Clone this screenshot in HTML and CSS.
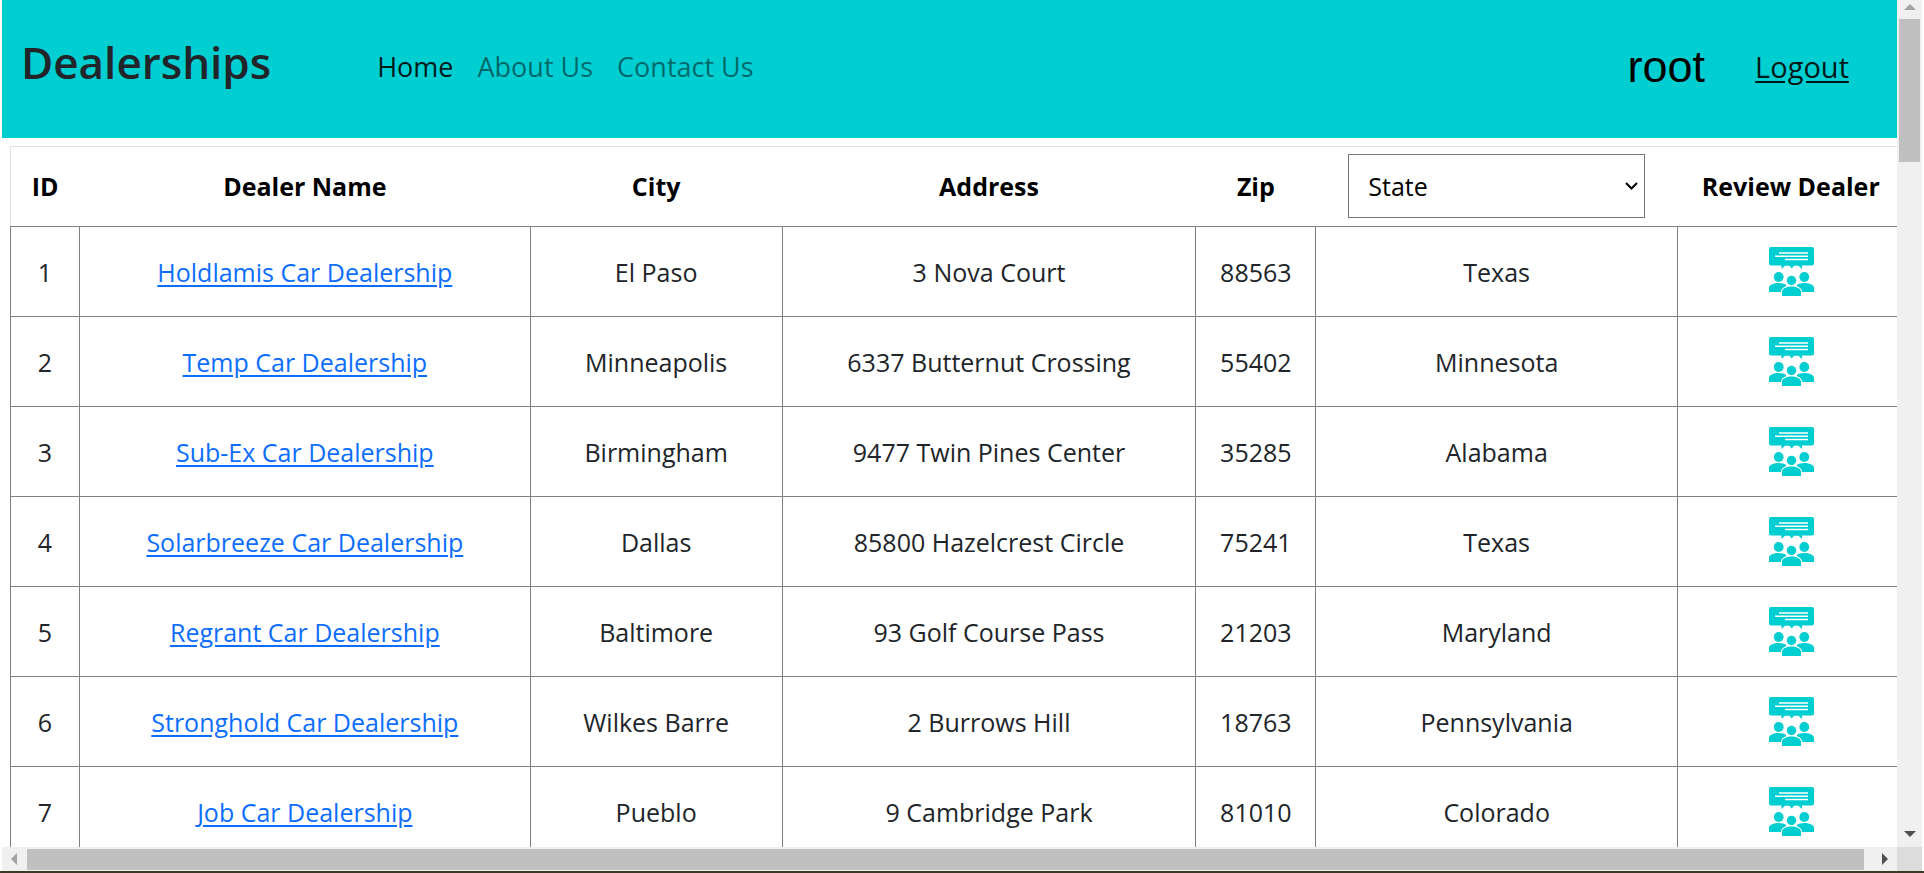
FILE: index.html
```html
<!DOCTYPE html>
<html lang="en">
<head>
<meta charset="utf-8">
<title>Dealerships</title>
<link rel="stylesheet" href="styles.css">
</head>
<body>
<svg class="sprite" aria-hidden="true">
  <symbol id="review" viewBox="0 0 45 49">
    <path fill-rule="evenodd" d="M2 0h41a2 2 0 0 1 2 2v14.500a2 2 0 0 1-2 2H33v3.500l-3.500-3.200H25L22.700 21.500 20.400 18.800H16l-3.500 3.200v-3.500H2a2 2 0 0 1-2-2V2a2 2 0 0 1 2-2zM10 5.300v1.400h29V5.300zM6 8.500v1.400h33V8.500zM16 11.800v1.400h23v-1.400z"/>
    <circle cx="9.700" cy="30" r="4.900"/>
    <circle cx="35.300" cy="30" r="4.900"/>
    <circle cx="22.500" cy="33.500" r="4.700"/>
    <path d="M0 45v-4.500C0 38 5 36 9.700 36c3 0 5.500.7 7.300 1.800v1.400c-3 1-5 2.800-5.200 5.800zM45 45v-4.500C45 38 40 36 35.300 36c-3 0-5.500.7-7.300 1.800v1.400c3 1 5 2.800 5.200 5.800zM13 49v-4.500c0-3 5-5 9.500-5s9.500 2 9.500 5V49z"/>
  </symbol>
</svg>
<div class="window">
  <main class="viewport">
    <nav class="navbar">
      <h1 class="brand">Dealerships</h1>
      <div class="links">
        <a class="link active" href="#home">Home</a>
        <a class="link" href="#about">About Us</a>
        <a class="link" href="#contact">Contact Us</a>
      </div>
      <div class="account">
        <span class="user">root</span>
        <a class="logout" href="#logout">Logout</a>
      </div>
    </nav>
    <table class="dealers">
      <colgroup>
        <col class="c-id"><col class="c-name"><col class="c-city"><col class="c-address"><col class="c-zip"><col class="c-state"><col class="c-review">
      </colgroup>
      <thead>
        <tr>
          <th>ID</th><th>Dealer Name</th><th>City</th><th>Address</th><th>Zip</th>
          <th><div class="picker"><select class="state" aria-label="State"><option>State</option><option>Alabama</option><option>Colorado</option><option>Maryland</option><option>Minnesota</option><option>Pennsylvania</option><option>Texas</option></select><svg class="chevron" viewBox="0 0 13 8" aria-hidden="true"><path d="M1 1l5.500 5.500L12 1"/></svg></div></th>
          <th>Review Dealer</th>
        </tr>
      </thead>
      <tbody>
        <tr><td>1</td><td><a href="#1">Holdlamis Car Dealership</a></td><td>El Paso</td><td>3 Nova Court</td><td>88563</td><td>Texas</td><td><a href="#r1" aria-label="Review"><svg class="icon"><use href="#review"/></svg></a></td></tr>
        <tr><td>2</td><td><a href="#2">Temp Car Dealership</a></td><td>Minneapolis</td><td>6337 Butternut Crossing</td><td>55402</td><td>Minnesota</td><td><a href="#r2" aria-label="Review"><svg class="icon"><use href="#review"/></svg></a></td></tr>
        <tr><td>3</td><td><a href="#3">Sub-Ex Car Dealership</a></td><td>Birmingham</td><td>9477 Twin Pines Center</td><td>35285</td><td>Alabama</td><td><a href="#r3" aria-label="Review"><svg class="icon"><use href="#review"/></svg></a></td></tr>
        <tr><td>4</td><td><a href="#4">Solarbreeze Car Dealership</a></td><td>Dallas</td><td>85800 Hazelcrest Circle</td><td>75241</td><td>Texas</td><td><a href="#r4" aria-label="Review"><svg class="icon"><use href="#review"/></svg></a></td></tr>
        <tr><td>5</td><td><a href="#5">Regrant Car Dealership</a></td><td>Baltimore</td><td>93 Golf Course Pass</td><td>21203</td><td>Maryland</td><td><a href="#r5" aria-label="Review"><svg class="icon"><use href="#review"/></svg></a></td></tr>
        <tr><td>6</td><td><a href="#6">Stronghold Car Dealership</a></td><td>Wilkes Barre</td><td>2 Burrows Hill</td><td>18763</td><td>Pennsylvania</td><td><a href="#r6" aria-label="Review"><svg class="icon"><use href="#review"/></svg></a></td></tr>
        <tr><td>7</td><td><a href="#7">Job Car Dealership</a></td><td>Pueblo</td><td>9 Cambridge Park</td><td>81010</td><td>Colorado</td><td><a href="#r7" aria-label="Review"><svg class="icon"><use href="#review"/></svg></a></td></tr>
      </tbody>
    </table>
  </main>
  <div class="bar vertical" aria-hidden="true">
    <svg class="arrow off" viewBox="0 0 12 6"><path d="M0 6L6 0l6 6z"/></svg>
    <div class="track"><div class="thumb"></div></div>
    <svg class="arrow" viewBox="0 0 12 6"><path d="M0 0l6 6 6-6z"/></svg>
  </div>
  <div class="bar horizontal" aria-hidden="true">
    <svg class="arrow off" viewBox="0 0 6 12"><path d="M6 0L0 6l6 6z"/></svg>
    <div class="track"><div class="thumb"></div></div>
    <svg class="arrow" viewBox="0 0 6 12"><path d="M0 0l6 6-6 6z"/></svg>
  </div>
  <div class="corner"></div>
</div>
</body>
</html>
```
FILE: styles.css
```css
* { box-sizing: border-box; }

body {
  margin: 0;
  background: #fff;
  color: #212529;
  font: 25px/40px "Open Sans", "Noto Sans", sans-serif;
}

.sprite { display: none; }

.window {
  display: grid;
  grid-template: minmax(0, 1fr) 24px / minmax(0, 1fr) 25px;
  height: 100vh;
  padding: 0 2px;
  border-bottom: 2px solid #3d372a;
}

.viewport { overflow: hidden; }

.navbar {
  display: flex;
  align-items: center;
  height: 138px;
  padding: 0 48px 4px 19px;
  background: #00ced1;
}

.brand {
  margin: 0 94px 10px 0;
  font-size: 44px;
  line-height: 60px;
  font-weight: 600;
}

.links { display: flex; font-size: 27px; }
.link {
  padding: 0 12px;
  color: rgba(0, 0, 0, .5);
  text-decoration: none;
}
.link.active { color: rgba(0, 0, 0, .9); }

.account {
  display: flex;
  align-items: center;
  gap: 50px;
  margin-left: auto;
  color: #000;
}
.user { font: 45px/60px "Liberation Sans", Arial, sans-serif; }
.logout { color: rgba(0, 0, 0, .9); font-size: 29px; text-underline-offset: 3px; }

.dealers {
  width: 100%;
  margin: 8px 0 0 8px;
  border-collapse: collapse;
  table-layout: fixed;
  text-align: center;
}
.c-id { width: 3.64%; }
.c-name { width: 23.8%; }
.c-city { width: 13.3%; }
.c-address { width: 21.85%; }
.c-zip { width: 6.33%; }
.c-state { width: 19.1%; }
.c-review { width: 11.98%; }

.dealers thead { border: 1px solid #dee2e6; }
.dealers th {
  height: 80px;
  padding: 0 0 2px;
  color: #000;
  font-weight: 700;
}
.dealers td {
  height: 90px;
  padding: 0;
  border: 1px solid #808080;
}
.dealers a { color: #0d6efd; text-underline-offset: 3px; }

.picker {
  display: grid;
  align-items: center;
  width: 82%;
  margin: 0 auto;
}
.state {
  grid-area: 1 / 1;
  height: 64px;
  width: 100%;
  padding: 0 19px;
  border: 1px solid #767676;
  border-radius: 0;
  background: #fff;
  color: #000;
  font: inherit;
  font-weight: 400;
  appearance: none;
}
.chevron {
  grid-area: 1 / 1;
  justify-self: end;
  width: 13px;
  height: 8px;
  margin-right: 7px;
  fill: none;
  stroke: #000;
  stroke-width: 2;
  pointer-events: none;
}

.icon {
  display: block;
  width: 45px;
  height: 49px;
  margin: 0 auto;
  fill: #00ced1;
}

.bar { display: flex; align-items: center; background: #f0f0f0; }
.track { flex: 1; }
.thumb { background: #c0c0c0; }
.arrow { width: 12px; height: 6px; fill: #505050; }
.arrow.off { fill: #a3a3a3; }

.vertical { flex-direction: column; padding: 4px 0 10px; }
.vertical .track { padding: 9px 0; }
.vertical .thumb { width: 21px; height: 143px; }

.horizontal { padding: 0 9px; }
.horizontal .arrow { width: 6px; height: 12px; }
.horizontal .track { padding: 0 18px 0 10px; }
.horizontal .thumb { height: 21px; }

.corner { background: #dcdcdc; }
```
